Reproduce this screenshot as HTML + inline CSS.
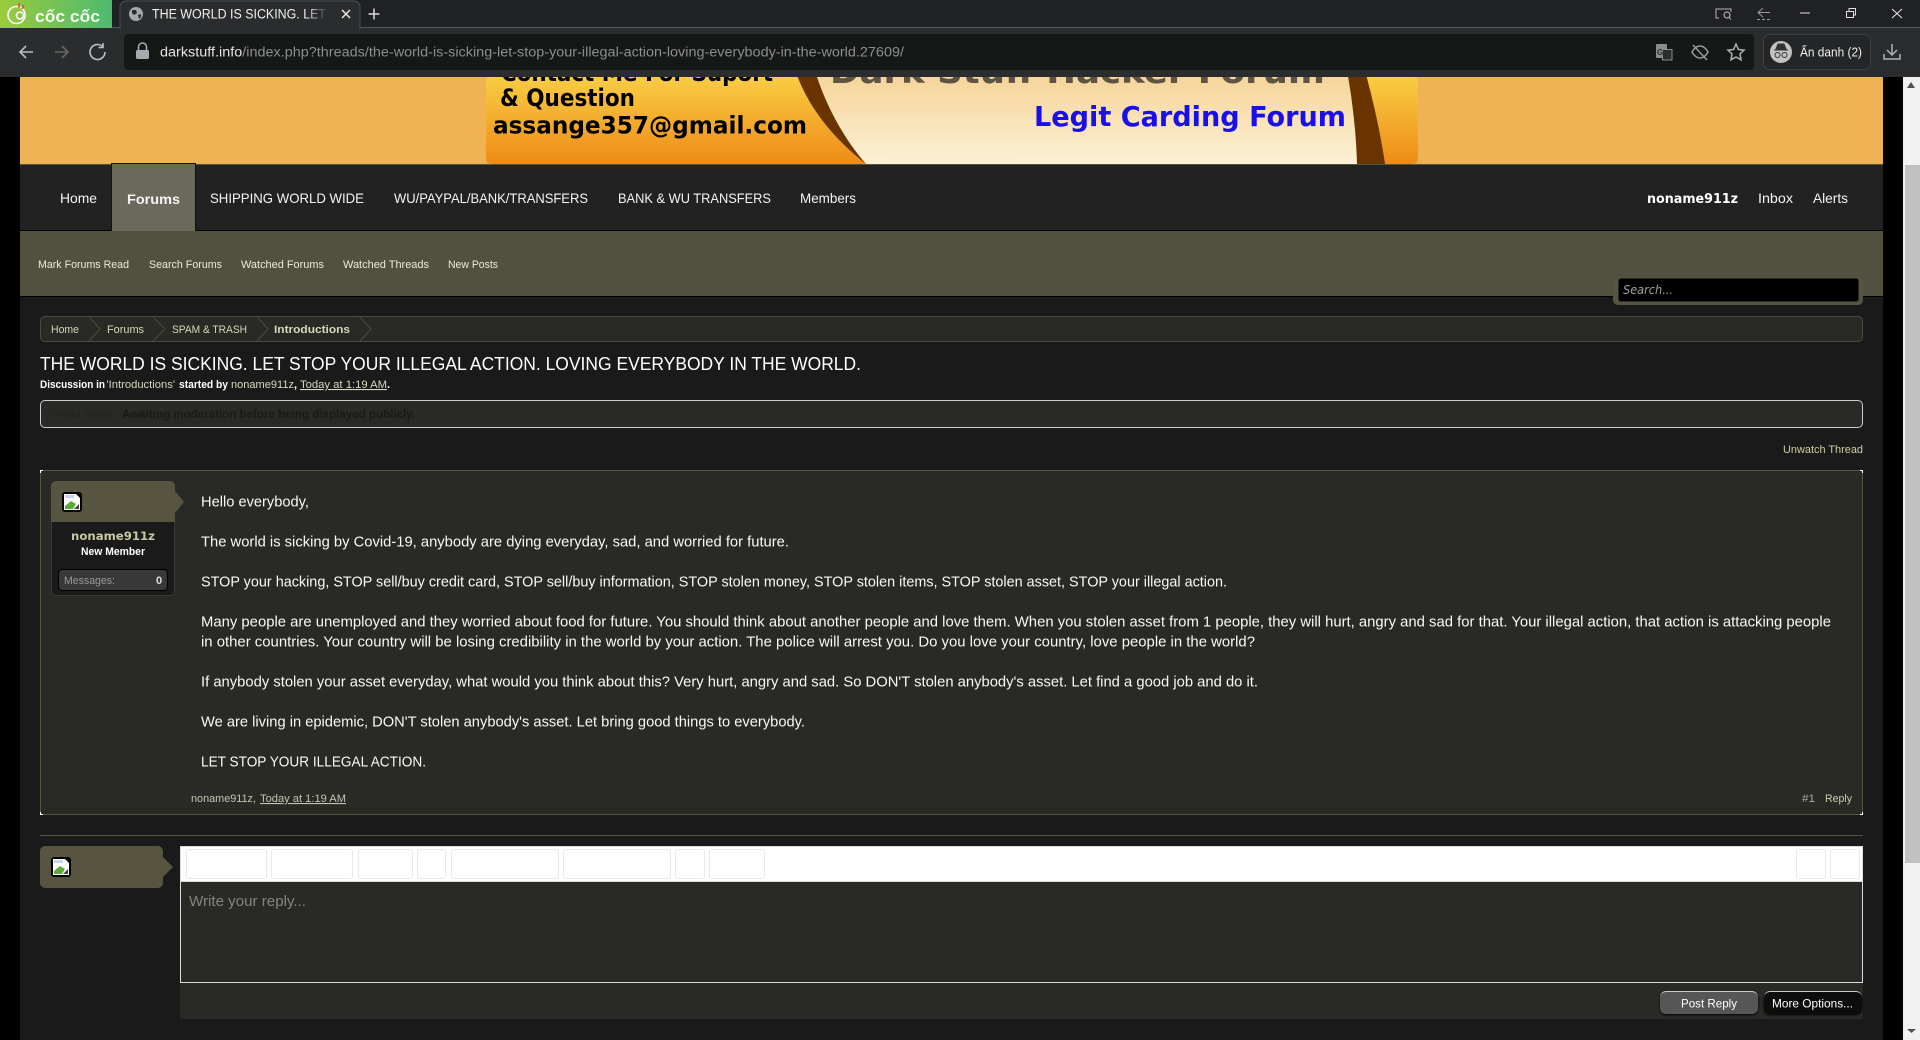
<!DOCTYPE html>
<html lang="en"><head><meta charset="utf-8"><title>THE WORLD IS SICKING</title>
<style>
html,body{margin:0;padding:0;width:1920px;height:1040px;overflow:hidden;background:#000;font-family:"Liberation Sans",sans-serif}
.a{position:absolute;box-sizing:border-box}
svg{position:absolute;left:0;top:0}
text{font-family:"Liberation Sans","DejaVu Sans",sans-serif}
.dj{font-family:"DejaVu Sans",sans-serif}
.du{text-decoration:underline dotted}
.tb{background:#fff;border:1px solid #e8e8e8;border-radius:3px;top:849px;height:30px}
</style></head><body>
<div class="a" style="left:20px;top:77px;width:1863px;height:963px;background:#1a1a1a"></div>
<div class="a" style="left:20px;top:77px;width:1863px;height:87px;background:#f0b354"></div>
<div class="a" style="left:20px;top:164px;width:1863px;height:67px;background:#222;border-top:1px solid #57553f;border-bottom:1px solid #000"></div>
<div class="a" style="left:111px;top:163px;width:85px;height:68px;background:#6b695a;border:1px solid #111;border-bottom:0"></div>
<div class="a" style="left:20px;top:231px;width:1863px;height:66px;background:#52503f;border-bottom:1px solid #000"></div>
<div class="a" style="left:40px;top:316px;width:1823px;height:26px;background:#292a25;border:1px solid #4c4b3a;border-radius:5px"></div>
<div class="a" style="left:1613px;top:277px;width:250px;height:28px;background:#57553f;border-radius:5px"></div>
<div class="a" style="left:1618px;top:278px;width:241px;height:24px;background:#000;border:1px solid #2a2a2a;border-radius:3px"></div>
<div class="a" style="left:40px;top:400px;width:1823px;height:28px;background:#292a25;border:1px solid #ccc;border-radius:5px"></div>
<div class="a" style="left:40px;top:470px;width:1823px;height:345px;background:#292a25;border:1px solid #57553f"></div>
<div class="a" style="left:51px;top:481px;width:124px;height:115px;background:#1a1a1a;border:1px solid #3a3a30;border-radius:5px"></div>
<div class="a" style="left:51px;top:481px;width:124px;height:41px;background:#57553f;border-radius:5px 5px 0 0"></div>
<div class="a" style="left:58px;top:569px;width:110px;height:22px;background:#383838;border:1px solid #000;border-radius:4px"></div>
<div class="a" style="left:40px;top:835px;width:1823px;height:1px;background:#57553f"></div>
<div class="a" style="left:40px;top:846px;width:123px;height:42px;background:#57553f;border-radius:5px"></div>
<div class="a" style="left:180px;top:982px;width:1683px;height:37px;background:#292a25"></div>
<div class="a" style="left:180px;top:846px;width:1683px;height:137px;background:#292a25;border:1px solid #ddd"></div>
<div class="a" style="left:181px;top:847px;width:1681px;height:35px;background:#fff;border-bottom:1px solid #ddd"></div>
<div class="a tb" style="left:186px;width:81px"></div>
<div class="a tb" style="left:271px;width:82px"></div>
<div class="a tb" style="left:358px;width:55px"></div>
<div class="a tb" style="left:417px;width:29px"></div>
<div class="a tb" style="left:451px;width:108px"></div>
<div class="a tb" style="left:563px;width:108px"></div>
<div class="a tb" style="left:675px;width:30px"></div>
<div class="a tb" style="left:709px;width:56px"></div>
<div class="a tb" style="left:1796px;width:30px"></div>
<div class="a tb" style="left:1830px;width:30px"></div>
<div class="a" style="left:1660px;top:991px;width:98px;height:23px;background:#565656;border-top:1px solid #ccc;border-radius:6px;box-shadow:0 1px 2px #000"></div>
<div class="a" style="left:1764px;top:991px;width:98px;height:23px;background:#0d0d0d;border-top:1px solid #ccc;border-radius:6px;box-shadow:0 1px 2px #000"></div>

<svg width="1920" height="1040" viewBox="0 0 1920 1040">
<defs>
<linearGradient id="g1" x1="0" y1="0" x2="0" y2="1"><stop offset="0" stop-color="#fbd94c"/><stop offset="1" stop-color="#ee8c17"/></linearGradient>
<linearGradient id="g2" x1="0" y1="0" x2="0" y2="1"><stop offset="0" stop-color="#f5cc88"/><stop offset="1" stop-color="#fbf0d2"/></linearGradient>
<linearGradient id="lg" x1="0" y1="0" x2="1" y2="0"><stop offset="0" stop-color="#9acb3c"/><stop offset="1" stop-color="#4dba70"/></linearGradient>
<linearGradient id="fade" x1="0" y1="0" x2="1" y2="0"><stop offset="0" stop-color="#2a2c2e" stop-opacity="0"/><stop offset="1" stop-color="#2a2c2e"/></linearGradient>
<pattern id="hatch" width="4" height="4" patternUnits="userSpaceOnUse"><path d="M0 4L4 0" stroke="#fff" stroke-opacity=".18" stroke-width="1"/></pattern>
</defs>
<!-- banner -->
<rect x="486" y="60" width="932" height="104" rx="5" fill="url(#g1)"/>
<path d="M792 60C803 100 828 134 866 164H1385C1380 130 1372 95 1362 60Z" fill="#693400"/>
<path d="M812 60C820 92 838 132 866 164H1357C1356 130 1352 95 1345 60Z" fill="url(#g2)"/>
<path d="M812 60C820 92 838 132 866 164H1357C1356 130 1352 95 1345 60Z" fill="url(#hatch)"/>
<g font-weight="700">
<text class="dj" x="501" y="81" font-size="24" fill="#000" textLength="272" lengthAdjust="spacingAndGlyphs">Contact Me For Suport</text>
<text class="dj" x="500" y="106" font-size="24" fill="#000" textLength="135" lengthAdjust="spacingAndGlyphs">&amp; Question</text>
<text class="dj" x="493" y="133.500" font-size="24" fill="#000" textLength="314" lengthAdjust="spacingAndGlyphs">assange357@gmail.com</text>
<text class="dj" x="830" y="83" font-size="34" fill="#5f5342" textLength="495" lengthAdjust="spacingAndGlyphs">Dark Stuff Hacker Forum</text>
<text class="dj" x="1034" y="126" font-size="28" fill="#1a0fe8" textLength="312" lengthAdjust="spacingAndGlyphs">Legit Carding Forum</text>
</g>
<!-- nav -->
<g font-size="14" fill="#f4f4f4">
<text x="60" y="203" textLength="37" lengthAdjust="spacingAndGlyphs">Home</text>
<text x="127" y="204" font-weight="700" textLength="53" lengthAdjust="spacingAndGlyphs">Forums</text>
<text x="210" y="203" textLength="154" lengthAdjust="spacingAndGlyphs">SHIPPING WORLD WIDE</text>
<text x="394" y="203" textLength="194" lengthAdjust="spacingAndGlyphs">WU/PAYPAL/BANK/TRANSFERS</text>
<text x="618" y="203" textLength="153" lengthAdjust="spacingAndGlyphs">BANK &amp; WU TRANSFERS</text>
<text x="800" y="203" textLength="56" lengthAdjust="spacingAndGlyphs">Members</text>
<text x="1758" y="203" textLength="35" lengthAdjust="spacingAndGlyphs">Inbox</text>
<text x="1813" y="203" textLength="35" lengthAdjust="spacingAndGlyphs">Alerts</text>
</g>
<text class="dj" x="1647" y="203" font-size="13" font-weight="700" fill="#fff" textLength="91" lengthAdjust="spacingAndGlyphs">noname911z</text>
<g font-size="11" fill="#ecebd8">
<text x="38" y="268" textLength="91" lengthAdjust="spacingAndGlyphs">Mark Forums Read</text>
<text x="149" y="268" textLength="73" lengthAdjust="spacingAndGlyphs">Search Forums</text>
<text x="241" y="268" textLength="83" lengthAdjust="spacingAndGlyphs">Watched Forums</text>
<text x="343" y="268" textLength="86" lengthAdjust="spacingAndGlyphs">Watched Threads</text>
<text x="448" y="268" textLength="50" lengthAdjust="spacingAndGlyphs">New Posts</text>
</g>
<text class="dj" x="1623" y="294" font-size="12" font-style="italic" fill="#a0a0a0" textLength="50" lengthAdjust="spacingAndGlyphs">Search...</text>
<!-- breadcrumb -->
<g fill="none" stroke="#4c4b3a"><path d="M89 317l11 12-11 12M153 317l12 12-12 12M257 317l11 12-11 12M360 317l11 12-11 12"/></g>
<g font-size="11" fill="#d8d7bb">
<text x="51" y="333" textLength="28" lengthAdjust="spacingAndGlyphs">Home</text>
<text x="107" y="333" textLength="37" lengthAdjust="spacingAndGlyphs">Forums</text>
<text x="172" y="333" textLength="75" lengthAdjust="spacingAndGlyphs">SPAM &amp; TRASH</text>
<text x="274" y="333" font-weight="700" textLength="76" lengthAdjust="spacingAndGlyphs">Introductions</text>
</g>
<text x="40" y="370" font-size="18" fill="#fff" textLength="821" lengthAdjust="spacingAndGlyphs">THE WORLD IS SICKING. LET STOP YOUR ILLEGAL ACTION. LOVING EVERYBODY IN THE WORLD.</text>
<g font-size="11" fill="#fff">
<text x="40" y="388" font-weight="700" textLength="65" lengthAdjust="spacingAndGlyphs">Discussion in</text>
<text x="106.500" y="388" fill="#d8d7bb" textLength="68.500" lengthAdjust="spacingAndGlyphs">'Introductions'</text>
<text x="179" y="388" font-weight="700" textLength="49" lengthAdjust="spacingAndGlyphs">started by</text>
<text x="231" y="388" fill="#d8d7bb" textLength="63" lengthAdjust="spacingAndGlyphs">noname911z</text>
<text x="294" y="388" font-weight="700">,</text>
<text x="300" y="388" fill="#d8d7bb" class="du" textLength="87" lengthAdjust="spacingAndGlyphs">Today at 1:19 AM</text>
<text x="387" y="388" font-weight="700">.</text>
</g>
<text x="46" y="418" font-size="12" fill="#232320" textLength="72" lengthAdjust="spacingAndGlyphs">Thread Status:</text>
<text x="122" y="418" font-size="12" font-weight="700" fill="#191919" textLength="293" lengthAdjust="spacingAndGlyphs">Awaiting moderation before being displayed publicly.</text>
<text x="1783" y="453" font-size="11" fill="#cfcda0" textLength="80" lengthAdjust="spacingAndGlyphs">Unwatch Thread</text>
<!-- corners -->
<path d="M40 470h3v1h-2v2h-1zM1863 470h-3v1h2v2h1zM40 815h3v-1h-2v-2h-1zM1863 815h-3v-1h2v-2h1z" fill="#fff"/>
<!-- post -->
<path d="M175 491l9 11-9 11z" fill="#57553f"/>
<rect x="62" y="492" width="20" height="20" rx="3" fill="#000"/><path d="M64 494h12l4 4v12H64z" fill="#fff"/><path d="M65 495h9v3h-9z" fill="#c4d4f4"/><path d="M65 506l6-5 5 3-3 5h-8z" fill="#5cab3c"/><path d="M74 509l5-5v5z" fill="#444"/>
<text class="dj" x="113" y="540" font-size="11.5" font-weight="700" fill="#c9c8a0" text-anchor="middle" textLength="84" lengthAdjust="spacingAndGlyphs">noname911z</text>
<text x="113" y="555" font-size="11" font-weight="700" fill="#fff" text-anchor="middle" textLength="64" lengthAdjust="spacingAndGlyphs">New Member</text>
<text x="64" y="584" font-size="11" fill="#9a9a9a" textLength="51" lengthAdjust="spacingAndGlyphs">Messages:</text>
<text x="156" y="584" font-size="11" font-weight="700" fill="#ddd">0</text>
<g font-size="15" fill="#f8f8f8">
<text x="201" y="506.500" textLength="108" lengthAdjust="spacingAndGlyphs">Hello everybody,</text>
<text x="201" y="546.500" textLength="588" lengthAdjust="spacingAndGlyphs">The world is sicking by Covid-19, anybody are dying everyday, sad, and worried for future.</text>
<text x="201" y="586.500" textLength="1026" lengthAdjust="spacingAndGlyphs">STOP your hacking, STOP sell/buy credit card, STOP sell/buy information, STOP stolen money, STOP stolen items, STOP stolen asset, STOP your illegal action.</text>
<text x="201" y="626.500" textLength="1630" lengthAdjust="spacingAndGlyphs">Many people are unemployed and they worried about food for future. You should think about another people and love them. When you stolen asset from 1 people, they will hurt, angry and sad for that. Your illegal action, that action is attacking people</text>
<text x="201" y="646.500" textLength="1054" lengthAdjust="spacingAndGlyphs">in other countries. Your country will be losing credibility in the world by your action. The police will arrest you. Do you love your country, love people in the world?</text>
<text x="201" y="686.500" textLength="1057" lengthAdjust="spacingAndGlyphs">If anybody stolen your asset everyday, what would you think about this? Very hurt, angry and sad. So DON'T stolen anybody's asset. Let find a good job and do it.</text>
<text x="201" y="726.500" textLength="604" lengthAdjust="spacingAndGlyphs">We are living in epidemic, DON'T stolen anybody's asset. Let bring good things to everybody.</text>
<text x="201" y="766.500" textLength="225" lengthAdjust="spacingAndGlyphs">LET STOP YOUR ILLEGAL ACTION.</text>
</g>
<text x="191" y="802" font-size="11" fill="#c4c4b4" textLength="65" lengthAdjust="spacingAndGlyphs">noname911z,</text>
<text x="260" y="802" font-size="11" fill="#c4c4b4" class="du" textLength="86" lengthAdjust="spacingAndGlyphs">Today at 1:19 AM</text>
<text x="1802" y="802" font-size="11" fill="#a8a8a8" textLength="13" lengthAdjust="spacingAndGlyphs">#1</text>
<text x="1825" y="802" font-size="11" fill="#cfcda0" textLength="27" lengthAdjust="spacingAndGlyphs">Reply</text>
<!-- reply -->
<path d="M163 857l10 10-10 10z" fill="#57553f"/>
<rect x="51" y="857" width="20" height="20" rx="3" fill="#000"/><path d="M53 859h12l4 4v12H53z" fill="#fff"/><path d="M54 860h9v3h-9z" fill="#c4d4f4"/><path d="M54 871l6-5 5 3-3 5h-8z" fill="#5cab3c"/><path d="M63 874l5-5v5z" fill="#444"/>
<text x="189" y="906" font-size="15" fill="#85857e" textLength="117" lengthAdjust="spacingAndGlyphs">Write your reply...</text>
<text x="1681" y="1007.500" font-size="12" fill="#fff" textLength="56" lengthAdjust="spacingAndGlyphs">Post Reply</text>
<text x="1772" y="1007.500" font-size="12" fill="#fff" textLength="81" lengthAdjust="spacingAndGlyphs">More Options...</text>
<!-- scrollbar -->
<rect x="1903" y="77" width="17" height="963" fill="#f1f1f1"/>
<rect x="1905" y="165" width="15" height="698" fill="#c1c1c1"/>
<path d="M1907 88l4-6 4 6z" fill="#505050"/>
<path d="M1907 1029h9l-4.500 4z" fill="#505050"/>
<!-- chrome -->
<rect x="0" y="0" width="1920" height="28" fill="#202124"/>
<rect x="0" y="27" width="1920" height="1" fill="#57585a"/>
<rect x="0" y="28" width="1920" height="49" fill="#2a2c2e"/>
<path d="M0 0H112V28H0z" fill="url(#lg)"/>
<circle cx="16.500" cy="15" r="8.500" fill="none" stroke="#fff" stroke-width="1.600"/><circle cx="20" cy="15.500" r="3.500" fill="none" stroke="#fff" stroke-width="1.600"/><path d="M19 3v5M24 5l-2 4" stroke="#e44" stroke-width="1.500"/>
<text x="35" y="22" font-size="16.500" font-weight="700" fill="#f4fbf0" textLength="65" lengthAdjust="spacingAndGlyphs">cốc cốc</text>
<path d="M120 28V7a6 6 0 0 1 6-6h228a6 6 0 0 1 6 6v21z" fill="#2a2c2e" stroke="#4a4b4d"/>
<rect x="121" y="27" width="238" height="2" fill="#2a2c2e"/>
<circle cx="136" cy="14" r="7" fill="#a6a8ab"/><path d="M132 10l4 0 1 3-3 2-2-2zM138 15l3-1 0 3-2 2z" fill="#2a2c2e"/>
<text x="152" y="18.500" font-size="13.500" fill="#f0f0f0" textLength="174" lengthAdjust="spacingAndGlyphs">THE WORLD IS SICKING. LET</text>
<rect x="306" y="4" width="22" height="20" fill="url(#fade)"/>
<path d="M342 10l8 8M350 10l-8 8" stroke="#e8e8e8" stroke-width="1.500"/>
<path d="M374 8.500v11M368.500 14h11" stroke="#dadada" stroke-width="1.500"/>
<path d="M1719 18h-3v-9h15v3" fill="none" stroke="#9a9a9a" stroke-width="1.200"/><circle cx="1727" cy="15" r="3" fill="none" stroke="#b0b0b0" stroke-width="1.200"/><path d="M1729 17.500l2 2" stroke="#b0b0b0"/>
<path d="M1763 8l-5 4.500 5 4.500M1758 12.500h12" fill="none" stroke="#9a9a9a"/><path d="M1757 19.500h13" stroke="#9a9a9a" stroke-dasharray="3 2"/>
<path d="M1800 13h10" stroke="#e0e0e0" stroke-width="1"/>
<rect x="1846.500" y="11.500" width="7" height="6" fill="none" stroke="#e0e0e0"/><path d="M1849 11v-2.500h6.500v6.500h-2" fill="none" stroke="#e0e0e0"/>
<path d="M1892 9l10 9M1902 9l-10 9" stroke="#e8e8e8"/>
<path d="M33 52H21M26 46l-6 6 6 6" fill="none" stroke="#bdbebf" stroke-width="1.600"/>
<path d="M55 52h12M62 46l6 6-6 6" fill="none" stroke="#666" stroke-width="1.600"/>
<path d="M105 52a7.500 7.500 0 1 1-2.300-5.400M103 43v4.500h-4.500" fill="none" stroke="#bdbebf" stroke-width="1.600"/>
<rect x="124" y="34" width="1630" height="36" rx="4" fill="#161818"/>
<path d="M138.500 50v-3a4 4 0 0 1 8 0v3" fill="none" stroke="#a8aab0" stroke-width="1.600"/><rect x="136" y="50" width="13" height="9" rx="1.500" fill="#a8aab0"/>
<text x="160" y="56.500" font-size="13.500" fill="#8c8d8e" textLength="744" lengthAdjust="spacingAndGlyphs"><tspan fill="#e4e4e4">darkstuff.info</tspan>/index.php?threads/the-world-is-sicking-let-stop-your-illegal-action-loving-everybody-in-the-world.27609/</text>
<rect x="1656" y="44" width="11" height="14" rx="1" fill="#8c8d8e"/><rect x="1662.500" y="49.500" width="9.500" height="10.500" fill="#2a2c2e" stroke="#8c8d8e"/><text x="1657" y="55" font-size="8" font-weight="700" fill="#2a2c2e">G</text>
<path d="M1692 52s3-6 8-6 8 6 8 6-3 6-8 6-8-6-8-6zM1693 45l14 15" fill="none" stroke="#9a9b9c" stroke-width="1.500"/>
<path d="M1736 44l2.500 5.500 5.500.6-4 3.900 1 5.800-5-2.800-5 2.800 1-5.800-4-3.900 5.500-.6z" fill="none" stroke="#b0b1b2" stroke-width="1.500"/>
<rect x="1763.500" y="34.500" width="107" height="35" rx="6" fill="#232527" stroke="#3c3e40"/>
<circle cx="1781" cy="52" r="11" fill="#c2c2c2"/><path d="M1774 50h14M1776 49l2-5h6l2 5z" fill="#333" stroke="#333"/><circle cx="1777.500" cy="55" r="2.500" fill="none" stroke="#333"/><circle cx="1784.500" cy="55" r="2.500" fill="none" stroke="#333"/>
<text x="1800" y="56.500" font-size="12.500" fill="#eee" textLength="62" lengthAdjust="spacingAndGlyphs">Ẩn danh (2)</text>
<path d="M1892 44v10M1887 50l5 5 5-5M1884 54v5h16v-5" fill="none" stroke="#b0b1b2" stroke-width="1.500"/>
</svg>
</body></html>
